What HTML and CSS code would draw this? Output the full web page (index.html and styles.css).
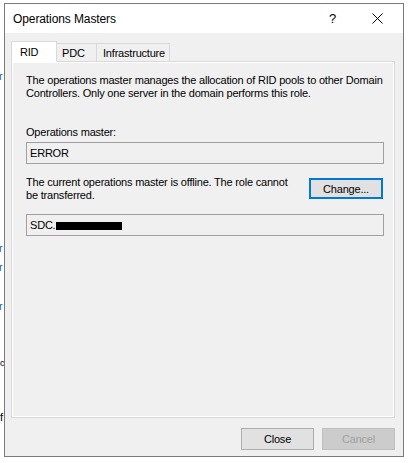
FILE: index.html
```html
<!DOCTYPE html>
<html>
<head>
<meta charset="utf-8">
<link rel="stylesheet" href="styles.css">
</head>
<body>
<div class="desk">
  <span class="frag frag-blue f1">r</span>
  <span class="frag frag-blue f2">r</span>
  <span class="frag frag-blue f3">r</span>
  <span class="frag frag-blue f4">r</span>
  <span class="frag f5">c</span>
  <span class="frag f6">f</span>
  <div class="window">
    <div class="titlebar">
      <span class="title">Operations Masters</span>
      <span class="help">?</span>
      <span class="close">
        <svg width="11" height="11" viewBox="0 0 11 11"><path d="M0.5 0.5 L10.5 10.5 M10.5 0.5 L0.5 10.5" stroke="#000" stroke-width="1" fill="none"/></svg>
      </span>
    </div>
    <div class="client">
      <div class="tabs">
        <div class="tab active tab-rid">RID</div>
        <div class="tab tab-pdc">PDC</div>
        <div class="tab tab-infra">Infrastructure</div>
      </div>
      <div class="panel">
        <p class="desc">The operations master manages the allocation of RID pools to other Domain Controllers. Only one server in the domain performs this role.</p>
        <div class="label">Operations master:</div>
        <div class="field">ERROR</div>
        <div class="row">
          <p class="status">The current operations master is offline. The role cannot be transferred.</p>
          <button class="btn btn-default">Change...</button>
        </div>
        <div class="field field-sdc">SDC.<span class="redact"></span></div>
      </div>
      <div class="actions">
        <button class="btn">Close</button>
        <button class="btn btn-disabled" disabled>Cancel</button>
      </div>
    </div>
  </div>
</div>
</body>
</html>
```

FILE: styles.css
```css
html, body {
  margin: 0;
  padding: 0;
  background: #ffffff;
}
.desk {
  position: relative;
  width: 408px;
  height: 463px;
  padding-top: 3px;
  padding-left: 4px;
  box-sizing: border-box;
  font-family: "Liberation Sans", Arial, sans-serif;
}
.frag {
  position: absolute;
  left: -1px;
  font-size: 11px;
  line-height: 11px;
  color: #000;
}
.frag-blue { color: #1a66b5; }
.f1 { top: 71px; }
.f2 { top: 243px; }
.f3 { top: 262px; }
.f4 { top: 301px; }
.f5 { top: 358px; left: 0; font-size: 9px; }
.f6 { top: 412px; left: 0; }

.window {
  position: relative;
  width: 400px;
  height: 454px;
  box-sizing: border-box;
  border: 1px solid #7a7a7a;
  background: #f0f0f0;
  display: flex;
  flex-direction: column;
}
.titlebar {
  height: 29px;
  background: #ffffff;
  display: flex;
  align-items: center;
  font-size: 12px;
  color: #000;
}
.title {
  margin-left: 8px;
  flex: 1;
  letter-spacing: -0.1px;
}
.help {
  width: 14px;
  margin-right: 29px;
  font-size: 13px;
}
.close {
  display: flex;
  width: 11px;
  margin-right: 20px;
}
.client {
  flex: 1;
  padding: 8px 8px 0 6px;
  display: flex;
  flex-direction: column;
  font-size: 11px;
  letter-spacing: -0.2px;
  color: #000;
}
.tabs {
  display: flex;
  align-items: flex-end;
  height: 20px;
  position: relative;
  z-index: 1;
}
.tab {
  height: 18px;
  box-sizing: border-box;
  border: 1px solid #d9d9d9;
  border-bottom: none;
  background: #f0f0f0;
  line-height: 18px;
  margin-left: -1px;
}
.tab-pdc {
  width: 41px;
  padding-left: 5px;
}
.tab-infra {
  width: 74px;
  padding-left: 6px;
}
.tab.active {
  width: 46px;
  height: 21px;
  background: #ffffff;
  border-color: #d9d9d9;
  margin-left: 0;
  margin-bottom: -1px;
  padding: 1px 0 0 8px;
  line-height: 19px;
  border-bottom: 1px solid #ffffff;
}
.panel {
  height: 357px;
  box-sizing: border-box;
  border: 1px solid #d9d9d9;
  box-shadow: inset 1px 1px 0 #ffffff, inset -1px -1px 0 #ffffff;
  background: #f0f0f0;
  padding: 12px 10px 0 14px;
  width: 384px;
}
.desc {
  margin: 0;
  line-height: 13px;
}
.label {
  margin-top: 26px;
  line-height: 13px;
}
.field {
  margin-top: 3px;
  height: 22px;
  box-sizing: border-box;
  border: 1px solid #a0a0a0;
  background: #f0f0f0;
  padding: 0 3px;
  line-height: 20px;
  width: 358px;
}
.row {
  display: flex;
  justify-content: space-between;
  align-items: flex-start;
  margin-top: 12px;
  width: 358px;
}
.status {
  margin: 0;
  line-height: 13px;
  width: 275px;
}
.btn {
  font-family: "Liberation Sans", Arial, sans-serif;
  font-size: 11px;
  letter-spacing: -0.2px;
  color: #000;
  background: #e1e1e1;
  border: 1px solid #adadad;
  height: 22px;
  width: 73px;
  padding: 0;
  margin: 0;
}
.btn-default {
  margin-top: 2px;
  height: 21px;
  width: 74px;
  margin-right: 1px;
  border: 2px solid #0078d7;
}
.field-sdc {
  margin-top: 12px;
}
.redact {
  display: inline-block;
  width: 66px;
  height: 8px;
  background: #000;
  vertical-align: -1px;
  margin-left: 1px;
}
.actions {
  display: flex;
  justify-content: flex-end;
  gap: 8px;
  margin-top: 10px;
  padding-right: 0;
}
.btn-disabled {
  background: #cccccc;
  border-color: #bfbfbf;
  color: #a0a0a0;
}
```
